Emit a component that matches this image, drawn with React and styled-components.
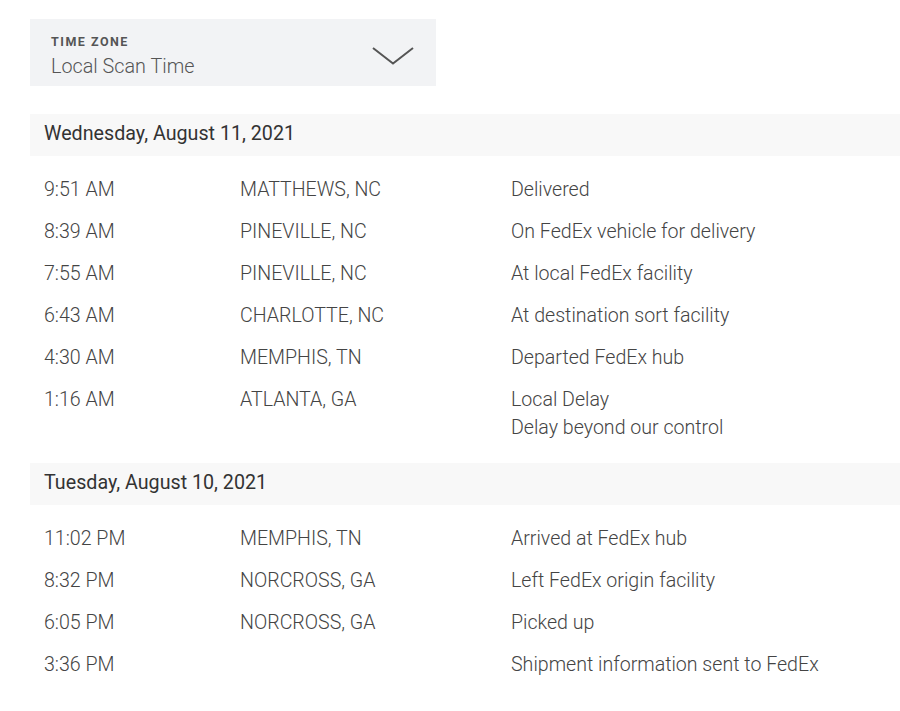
import React from "react";
import styled, { createGlobalStyle } from "styled-components";

const GlobalStyle = createGlobalStyle`
  body {
    margin: 0;
    background: #fff;
    font-family: Roboto, "Liberation Sans", sans-serif;
    color: #333;
  }
`;

const Page = styled.div`
  padding: 19px 0 0 30px;
  width: 870px;
`;

const Select = styled.div`
  width: 406px;
  height: 67px;
  box-sizing: border-box;
  background: #f2f3f5;
  display: flex;
  align-items: center;
  justify-content: space-between;
  padding: 0 22px 0 21px;
`;

const SelectText = styled.div`
  display: flex;
  flex-direction: column;
  margin-top: 8px;
`;

const Label = styled.span`
  font-size: 12.5px;
  font-weight: 700;
  letter-spacing: 1.5px;
  color: #555;
  line-height: 14px;
`;

const Value = styled.span`
  font-size: 19.8px;
  font-weight: 300;
  color: #555;
  line-height: 24px;
  margin-top: 6px;
`;

const ChevronIcon = styled.svg`
  margin-top: 6px;
  flex-shrink: 0;
`;

const Group = styled.section`
  margin-top: ${p => p.first ? "28px" : "14px"};
`;

const DayHeader = styled.div`
  height: 42px;
  box-sizing: border-box;
  padding: 0 0 4px 14px;
  background: #f8f8f8;
  display: flex;
  align-items: center;
  font-size: 19.7px;
  font-weight: 400;
  color: #333;
`;

const Rows = styled.div`
  padding-top: 13px;
`;

const Row = styled.div`
  display: grid;
  grid-template-columns: 196px 271px 1fr;
  padding: 7px 0 7px 14px;
  font-size: 19.6px;
  font-weight: 300;
  line-height: 28px;
  color: #444;
`;

const Cell = styled.div`
  display: flex;
  flex-direction: column;
`;

const Chevron = () => (
  <ChevronIcon width="42" height="20" viewBox="0 0 42 20">
    <polyline points="1,2 21,17.5 41,2" fill="none" stroke="#555" strokeWidth="2" />
  </ChevronIcon>
);

const days = [
  {
    date: "Wednesday, August 11, 2021",
    events: [
      ["9:51 AM", "MATTHEWS, NC", ["Delivered"]],
      ["8:39 AM", "PINEVILLE, NC", ["On FedEx vehicle for delivery"]],
      ["7:55 AM", "PINEVILLE, NC", ["At local FedEx facility"]],
      ["6:43 AM", "CHARLOTTE, NC", ["At destination sort facility"]],
      ["4:30 AM", "MEMPHIS, TN", ["Departed FedEx hub"]],
      ["1:16 AM", "ATLANTA, GA", ["Local Delay", "Delay beyond our control"]],
    ],
  },
  {
    date: "Tuesday, August 10, 2021",
    events: [
      ["11:02 PM", "MEMPHIS, TN", ["Arrived at FedEx hub"]],
      ["8:32 PM", "NORCROSS, GA", ["Left FedEx origin facility"]],
      ["6:05 PM", "NORCROSS, GA", ["Picked up"]],
      ["3:36 PM", "", ["Shipment information sent to FedEx"]],
    ],
  },
];

export default function App() {
  return (
    <>
      <GlobalStyle />
      <Page>
        <Select>
          <SelectText>
            <Label>TIME ZONE</Label>
            <Value>Local Scan Time</Value>
          </SelectText>
          <Chevron />
        </Select>
        {days.map((d, i) => (
          <Group key={d.date} first={i === 0}>
            <DayHeader>{d.date}</DayHeader>
            <Rows>
              {d.events.map(([time, place, status]) => (
                <Row key={time}>
                  <Cell>{time}</Cell>
                  <Cell>{place}</Cell>
                  <Cell>
                    {status.map(s => <span key={s}>{s}</span>)}
                  </Cell>
                </Row>
              ))}
            </Rows>
          </Group>
        ))}
      </Page>
    </>
  );
}
